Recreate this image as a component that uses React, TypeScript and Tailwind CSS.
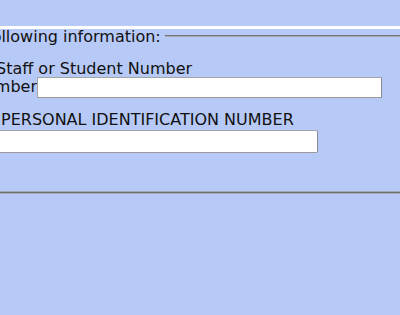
export default function App() {
  return (
    <div className="w-[400px] h-[315px] overflow-hidden bg-[#b7c9f7] text-[#111] text-[16px] font-['DejaVu_Sans',sans-serif]">
      <div className="h-[26px]" />
      <div className="h-[3px] bg-white" />
      <div className="flex items-start h-[13px]">
        <span className="ml-[-14px] -mt-[2px] leading-[19px] whitespace-nowrap">following information:</span>
        <div className="flex-1 mt-[6px] ml-[4px] border-t border-t-[#767676] border-b border-b-[#a3a9b8]" />
      </div>
      <div className="mt-[17px] ml-[-4px] leading-[19px] whitespace-nowrap">Staff or Student Number</div>
      <div className="flex items-start -mt-[1px]">
        <div className="w-[37px] flex justify-end overflow-hidden">
          <span className="leading-[19px] whitespace-nowrap">Number</span>
        </div>
        <input
          type="text"
          className="w-[345px] h-[21px] bg-white border border-[#a4a4a4] border-r-[#8a8a8a] border-b-[#9a9a9a] outline-none"
        />
      </div>
      <div className="mt-[12px] ml-[1px] leading-[19px] whitespace-nowrap">PERSONAL IDENTIFICATION NUMBER</div>
      <div className="mt-[1px] flex">
        <input
          type="password"
          className="ml-[-10px] w-[328px] h-[23px] bg-white border border-[#a4a4a4] border-r-[#8a8a8a] border-b-[#9a9a9a] rounded-[2px] outline-none"
        />
      </div>
      <div className="mt-[38px] border-t border-t-[#a3a9b8]">
        <div className="border-t border-t-[#6e6e6e] border-b border-b-[#a3a9b8]" />
      </div>
    </div>
  );
}
